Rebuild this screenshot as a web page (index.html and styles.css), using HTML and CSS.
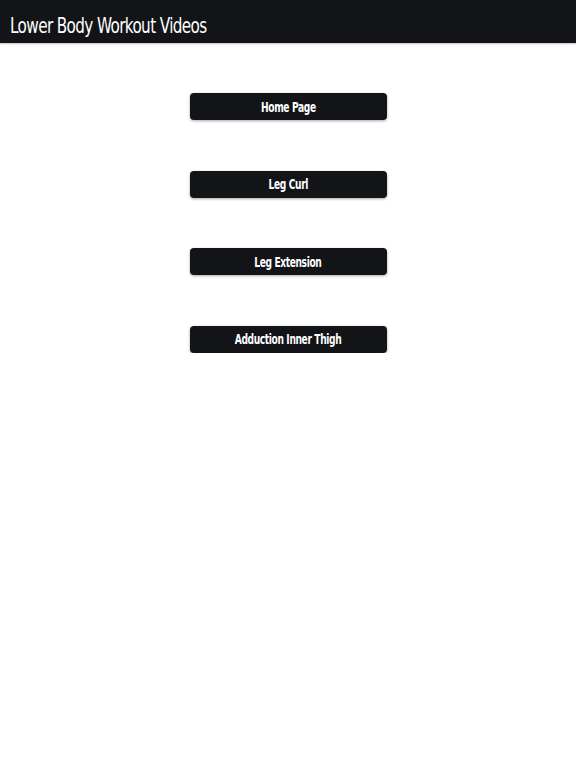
FILE: index.html
```html
<!DOCTYPE html>
<html>
<head>
<meta charset="utf-8">
<link rel="stylesheet" href="styles.css">
</head>
<body>
<header class="bar"><h1 class="title"><span class="narrow left">Lower Body Workout Videos</span></h1></header>
<main class="list">
  <a class="btn" href="#"><span class="narrow">Home Page</span></a>
  <a class="btn" href="#"><span class="narrow">Leg Curl</span></a>
  <a class="btn" href="#"><span class="narrow">Leg Extension</span></a>
  <a class="btn" href="#"><span class="narrow">Adduction Inner Thigh</span></a>
</main>
</body>
</html>
```
FILE: styles.css
```css
html, body { margin: 0; padding: 0; background: #fff; }
body { font-family: "DejaVu Sans", sans-serif; font-stretch: condensed; }
.narrow {
  display: inline-block;
  transform: scaleX(0.77);
  transform-origin: center;
  white-space: nowrap;
}
.narrow.left { transform-origin: left center; }
.bar {
  height: 43px;
  background: #121417;
  display: flex;
  align-items: flex-end;
  padding: 0 10px 0;
  box-sizing: border-box;
  box-shadow: 0 1px 2px rgba(0,0,0,0.25);
}
.title {
  margin: 0;
  color: #fff;
  font-weight: normal;
  font-size: 22px;
  line-height: 34px;
  letter-spacing: -0.8px;
  font-stretch: condensed;
}
.list {
  display: flex;
  flex-direction: column;
  align-items: center;
  padding-top: 50px;
  gap: 50.5px;
}
.btn {
  width: 197px;
  height: 27px;
  box-sizing: border-box;
  background: #121417;
  color: #fff;
  border-radius: 4px;
  text-decoration: none;
  display: flex;
  align-items: center;
  justify-content: center;
  font-weight: bold;
  font-size: 13.5px;
  letter-spacing: -0.5px;
  font-stretch: condensed;
  box-shadow: 0 1px 3px rgba(0,0,0,0.35);
}
.btn .narrow { transform: scaleX(0.75); }
```
